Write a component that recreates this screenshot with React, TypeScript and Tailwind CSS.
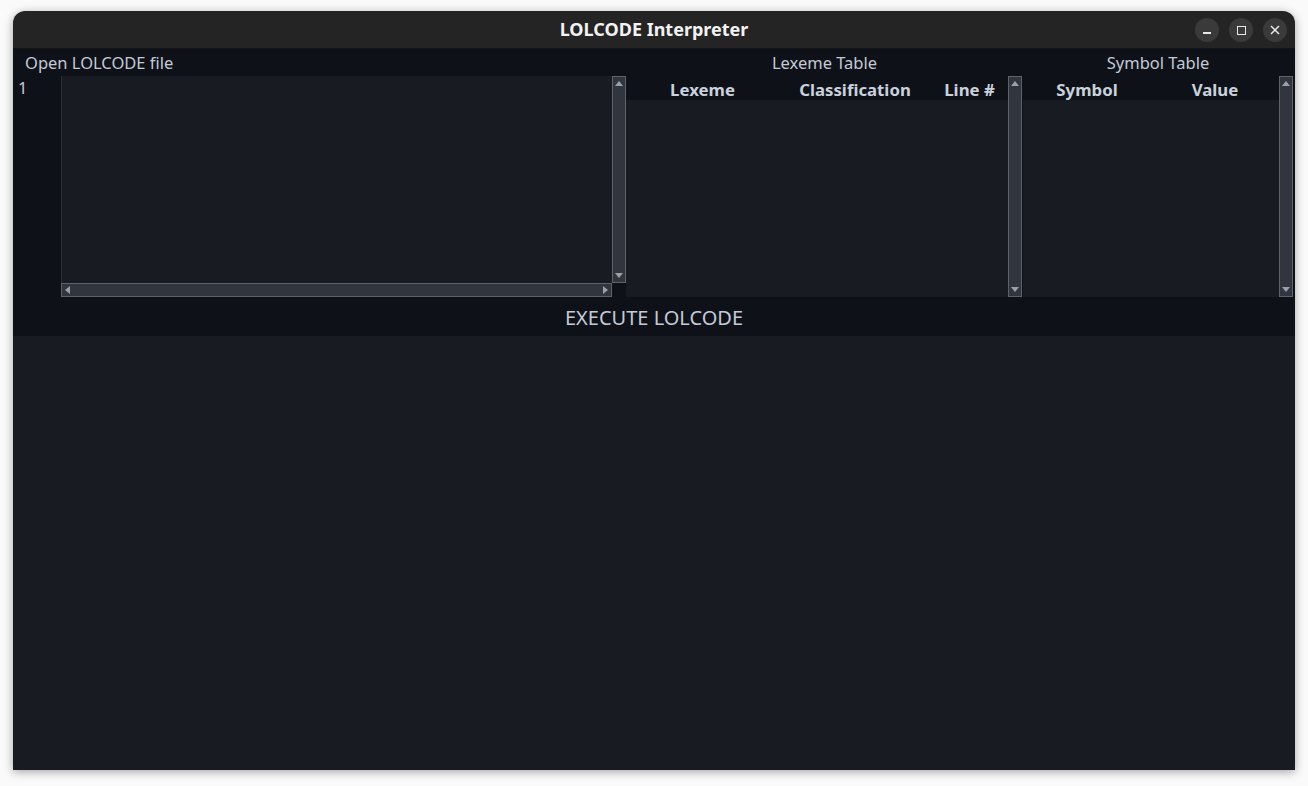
import React from 'react';

const ui = { fontFamily: '"Noto Sans", "Open Sans", sans-serif' };

const ArrowUp = () => (
  <svg width="8" height="5" viewBox="0 0 8 5">
    <path d="M0 5 L4 0 L8 5 Z" fill="#9aa1ab" />
  </svg>
);
const ArrowDown = () => (
  <svg width="8" height="5" viewBox="0 0 8 5">
    <path d="M0 0 L4 5 L8 0 Z" fill="#9aa1ab" />
  </svg>
);
const ArrowLeft = () => (
  <svg width="5" height="8" viewBox="0 0 5 8">
    <path d="M5 0 L0 4 L5 8 Z" fill="#9aa1ab" />
  </svg>
);
const ArrowRight = () => (
  <svg width="5" height="8" viewBox="0 0 5 8">
    <path d="M0 0 L5 4 L0 8 Z" fill="#9aa1ab" />
  </svg>
);

const VScroll = () => (
  <div className="w-[14px] h-full bg-[#30353e] border border-[#5d626b] flex flex-col justify-between items-center py-[4px]">
    <ArrowUp />
    <ArrowDown />
  </div>
);

const HScroll = () => (
  <div className="h-[14px] w-full bg-[#30353e] border border-[#5d626b] flex justify-between items-center px-[3px]">
    <ArrowLeft />
    <ArrowRight />
  </div>
);

const WinButton = ({ children }: { children: React.ReactNode }) => (
  <div className="w-[24px] h-[24px] rounded-full bg-[#3a3a3a] flex items-center justify-center">
    {children}
  </div>
);

export default function App() {
  return (
    <div className="w-[1308px] h-[786px] bg-[#fafafa] pt-[11px] pl-[13px]" style={ui}>
      <div className="w-[1282px] h-[759px] flex flex-col rounded-t-[12px] overflow-hidden shadow-[0_2px_10px_rgba(0,0,0,0.35)]">
        {/* title bar */}
        <div className="h-[38px] bg-[#242424] border-b border-[#141414] flex items-center relative">
          <div
            className="w-full text-center text-[18px] font-bold text-[#f2f2f2]"
            style={{ fontFamily: '"Noto Sans", sans-serif' }}
          >
            LOLCODE Interpreter
          </div>
          <div className="absolute right-[8px] top-[7px] flex gap-[10px]">
            <WinButton>
              <div className="w-[8px] h-[1.5px] bg-[#e8e8e8] mt-[6px]" />
            </WinButton>
            <WinButton>
              <div className="w-[9px] h-[9px] border-[1.5px] border-[#e8e8e8]" />
            </WinButton>
            <WinButton>
              <svg width="10" height="10" viewBox="0 0 10 10">
                <path d="M1 1 L9 9 M9 1 L1 9" stroke="#e8e8e8" strokeWidth="1.5" />
              </svg>
            </WinButton>
          </div>
        </div>

        {/* top band */}
        <div className="bg-[#0e1118] flex flex-col">
          <div className="flex h-[27px] items-center pt-[2px] text-[16.5px] text-[#c3cbd7]">
            <div className="w-[613px] pl-[12px]">Open LOLCODE file</div>
            <div className="w-[397px] text-center">Lexeme Table</div>
            <div className="w-[270px] text-center">Symbol Table</div>
          </div>

          <div className="flex h-[221px]">
            {/* editor */}
            <div className="w-[48px] text-[16.5px] text-[#c3cbd7] pl-[5px] pt-[1px] leading-[22px]">1</div>
            <div className="w-[565px] flex flex-col">
              <div className="flex h-[207px]">
                <div className="w-[551px] bg-[#181b22] border-l border-[#2b2f37]" />
                <VScroll />
              </div>
              <div className="flex h-[14px]">
                <div className="w-[551px]">
                  <HScroll />
                </div>
              </div>
            </div>

            {/* lexeme table */}
            <div className="w-[382px] flex flex-col">
              <div className="h-[24px] flex items-center pt-[3px] text-[16.8px] font-bold text-[#c9d1dc]">
                <div className="w-[153px] text-center">Lexeme</div>
                <div className="w-[152px] text-center">Classification</div>
                <div className="w-[77px] text-center">Line #</div>
              </div>
              <div className="flex-1 bg-[#181b22]" />
            </div>
            <VScroll />

            {/* symbol table */}
            <div className="w-[256px] flex flex-col ml-[1px]">
              <div className="h-[24px] flex items-center pt-[3px] text-[16.8px] font-bold text-[#c9d1dc]">
                <div className="w-[128px] text-center">Symbol</div>
                <div className="w-[128px] text-center">Value</div>
              </div>
              <div className="flex-1 bg-[#181b22]" />
            </div>
            <VScroll />
          </div>

          <div className="h-[39px] flex items-center justify-center pt-[2px] text-[20px] text-[#c3cbd7]">
            EXECUTE LOLCODE
          </div>
        </div>

        {/* output area */}
        <div className="flex-1 bg-[#181b22]" />
      </div>
    </div>
  );
}
